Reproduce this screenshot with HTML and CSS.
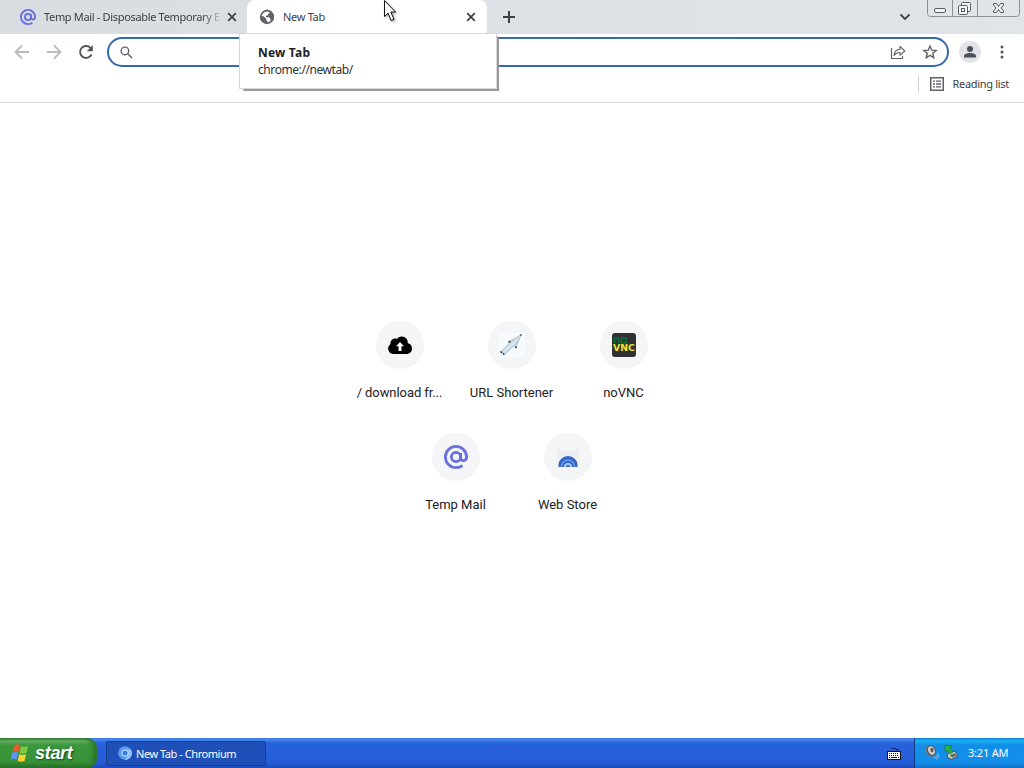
FILE: index.html
```html
<!DOCTYPE html>
<html lang="en">
<head>
    <meta charset="UTF-8">
    <meta name="viewport" content="width=device-width, initial-scale=1.0">
    <title>New Tab</title>
    <link rel="stylesheet" href="styles.css">
</head>
<body>
<svg class="defs" width="0" height="0">
    <symbol id="at" viewBox="0 0 24 24">
        <g fill="none" stroke="#6a6fe0" stroke-width="2.8">
            <circle cx="12" cy="12" r="4.6"/>
            <path d="M16.6 8v5.2c0 3.600 6 3.400 6-1.200A10.600 10.600 0 1 0 12 22.600c2.500 0 4.500-.6 6.500-2"/>
        </g>
    </symbol>
    <symbol id="close" viewBox="0 0 10 10">
        <path d="M1.2 1.2l7.600 7.600M8.800 1.2L1.200 8.800" fill="none" stroke="#3c4043" stroke-width="1.7"/>
    </symbol>
</svg>
<div class="desktop">
    <div class="tab-strip">
        <div class="tab">
            <svg class="tab-icon" width="16" height="16"><use href="#at"/></svg>
            <span class="tab-title fade">Temp Mail - Disposable Temporary E</span>
            <svg class="tab-close" width="10" height="10"><use href="#close"/></svg>
        </div>
        <div class="tab active">
            <svg class="tab-icon" width="16" height="16" viewBox="0 0 16 16">
                <circle cx="8" cy="8" r="6.300" fill="#fff" stroke="#5f6368" stroke-width="1.700"/>
                <path d="M5.500 1.500L11 1.300v2.200L9 5v1.500H7v1.800h3l1.300 1.200v2l2 .8L15 9V6l-2.500-3.500L8 .5zM1.500 7l3 .3 2.800 2.500v1.500l1.200 1v2.200l-3-.5L2 11z" fill="#5f6368"/>
            </svg>
            <span class="tab-title">New Tab</span>
            <svg class="tab-close" width="10" height="10"><use href="#close"/></svg>
        </div>
        <svg class="new-tab" width="14" height="14" viewBox="0 0 14 14">
            <path d="M7 1v12M1 7h12" stroke="#3c4043" stroke-width="2"/>
        </svg>
        <svg class="tab-search" width="12" height="8" viewBox="0 0 12 8">
            <path d="M1.500 1.500L6 6l4.500-4.500" fill="none" stroke="#3c4043" stroke-width="1.800"/>
        </svg>
        <svg class="window-buttons" width="94" height="18" viewBox="0 0 94 18">
            <path d="M.5 0v13.500q0 3 3 3h86q3 0 3-3V0M25.500 0v16M50.500 0v16" fill="none" stroke="#8c9096"/>
            <g fill="#f1f3f4" stroke="#5c6066">
                <rect x="7.500" y="8.500" width="11" height="4" rx="1.500"/>
                <rect x="34.500" y="2.500" width="9" height="9" rx="1"/>
                <rect x="31.500" y="5.500" width="9" height="9" rx="1"/>
                <rect x="34.500" y="8.500" width="3" height="3"/>
                <path d="M66.500 3.500h3l2 3 2-3h3v1.500L74 8l2.500 3v1.500h-3l-2-3-2 3h-3V11L69 8l-2.500-3z"/>
            </g>
        </svg>
    </div>

    <div class="toolbar">
        <svg class="nav-arrow" width="16" height="16" viewBox="0 0 16 16">
            <path d="M15 8H2M8 1.500L1.500 8 8 14.500" fill="none" stroke="#b9bbbe" stroke-width="1.800"/>
        </svg>
        <svg class="nav-arrow" width="16" height="16" viewBox="0 0 16 16">
            <path d="M1 8h13M8 1.500L14.500 8 8 14.500" fill="none" stroke="#b9bbbe" stroke-width="1.800"/>
        </svg>
        <svg class="nav-reload" width="16" height="16" viewBox="0 0 16 16">
            <path d="M13.500 10.500A6 6 0 1 1 12.300 3.700L14 5.500" fill="none" stroke="#50545a" stroke-width="1.900"/>
            <path d="M14.800 1v6.200H8.800z" fill="#50545a"/>
        </svg>
        <div class="omnibox">
            <svg width="13" height="13" viewBox="0 0 14 14">
                <g fill="none" stroke="#5f6368" stroke-width="1.500">
                    <circle cx="5.300" cy="5.300" r="4.100"/>
                    <path d="M8.300 8.300l4.700 4.700"/>
                </g>
            </svg>
            <svg class="share" width="16" height="15" viewBox="0 0 16 15">
                <path d="M1.500 3v10.500h11V11" fill="none" stroke="#5f6368" stroke-width="1.200"/>
                <path d="M4 10.500C4.500 6.500 6.500 4.500 10 4.300V1.500L14.800 6 10 10.200V7.500C7.500 7.400 5.500 8.400 4 10.500z" fill="none" stroke="#5f6368" stroke-width="1.100" stroke-linejoin="round"/>
            </svg>
            <svg class="star" width="16" height="16" viewBox="0 0 16 16">
                <path d="M8 2l1.700 4.200 4.400.3-3.400 2.900 1.100 4.400L8 11.400l-3.800 2.400 1.100-4.400-3.400-2.900 4.400-.3z" fill="none" stroke="#5f6368" stroke-width="1.400"/>
            </svg>
        </div>
        <div class="avatar">
            <svg width="14" height="14" viewBox="0 0 14 14">
                <circle cx="7" cy="4" r="3" fill="#4c5058"/>
                <path d="M1 12.500V11C1 9 4 8 7 8s6 1 6 3v1.500z" fill="#4c5058"/>
            </svg>
        </div>
        <svg class="menu" width="4" height="16" viewBox="0 0 4 16">
            <g fill="#50545a"><circle cx="2" cy="3" r="1.500"/><circle cx="2" cy="8" r="1.500"/><circle cx="2" cy="13" r="1.500"/></g>
        </svg>
    </div>

    <div class="bookmarks-bar">
        <span class="divider"></span>
        <svg width="14" height="14" viewBox="0 0 14 14">
            <rect x=".75" y=".75" width="12.500" height="12.500" fill="none" stroke="#5f6368" stroke-width="1.500"/>
            <path d="M3 4.200h2M6 4.200h5M3 7h2M6 7h5M3 9.800h2M6 9.800h5" stroke="#5f6368" stroke-width="1.300"/>
        </svg>
        <span class="reading-list">Reading list</span>
    </div>

    <div class="page">
        <div class="tiles">
            <div class="tile">
                <div class="tile-icon">
                    <svg width="24" height="24" viewBox="0 0 24 24">
                        <path d="M5.500 21A5.500 5.500 0 0 1 2.500 11C2 7.500 5.500 4.500 9 6c2-4 9-3.200 10.500 1.500.3 1 .2 1.800.1 2.500 2.500.4 4.400 2.700 4.400 5.500 0 3.200-2.400 5.500-5.400 5.500z" fill="#000"/>
                        <path d="M12 9l4 4.300h-2.500V18h-3v-4.700H8z" fill="#fff"/>
                    </svg>
                </div>
                <span class="tile-title download">/ download fr...</span>
            </div>
            <div class="tile">
                <div class="tile-icon">
                    <svg width="26" height="24" viewBox="0 0 26 24">
                        <path d="M0 0h26v24H0z" fill="#f7fbfd"/>
                        <path d="M1 19l8.500-8.500-.5-2L23 1l-5.500 13-3-.5L6 22z" fill="#b8cad6"/>
                        <path d="M3.500 18.500L12 10l10-8-6 9-10 9z" fill="#d7e5ee"/>
                        <path d="M1.500 18.500l4 3.500M9.500 8.500l2 .500M16 14l2 .500M21 2.500l1.500-1" stroke="#34434c" stroke-width="1.500" stroke-dasharray="2 1"/>
                    </svg>
                </div>
                <span class="tile-title">URL Shortener</span>
            </div>
            <div class="tile">
                <div class="tile-icon">
                    <svg class="vnc" width="24" height="24" viewBox="0 0 24 24">
                        <rect width="24" height="24" rx="3" fill="#313131"/>
                        <path d="M2.500 10.500V5h4v5.500M9.500 5h4.500v4.700H9.500z" fill="none" stroke="#08703a" stroke-width="1.600"/>
                        <text x="1" y="18" textLength="22" lengthAdjust="spacingAndGlyphs" fill="#eee52e">VNC</text>
                    </svg>
                </div>
                <span class="tile-title">noVNC</span>
            </div>
            <div class="tile">
                <div class="tile-icon">
                    <svg width="24" height="24"><use href="#at"/></svg>
                </div>
                <span class="tile-title">Temp Mail</span>
            </div>
            <div class="tile">
                <div class="tile-icon">
                    <svg width="20" height="20" viewBox="0 0 20 20">
                        <path d="M0 1l4 3h12l4-3v17H0z" fill="#ebedee"/>
                        <path d="M.5 20v-2a9.500 9 0 0 1 19 0v2z" fill="#3467c9"/>
                        <path d="M3.500 20a6.500 7 0 0 1 13 0" fill="none" stroke="#6f9ae2" stroke-width="1.300"/>
                        <path d="M6 20a4 4 0 0 1 8 0z" fill="#bdd3f3"/>
                        <path d="M7.500 20a2.500 2.500 0 0 1 5 0z" fill="#4a7bd6"/>
                    </svg>
                </div>
                <span class="tile-title">Web Store</span>
            </div>
        </div>
    </div>

    <div class="taskbar">
        <div class="start">
            <svg width="20" height="20" viewBox="0 0 20 20">
                <path d="M4.500 2.500Q7 .5 10 2L8.500 9Q6 7.500 2.500 9z" fill="#ec5b2c"/>
                <path d="M11 3q3 1.500 7 0L16.500 10q-3.500 1.500-7 0z" fill="#80cb3c"/>
                <path d="M2 10.200q3-2 6.200-.5L6.500 16.500q-3-1.500-6 .2z" fill="#5d91f5"/>
                <path d="M9.200 11.200q3.500 1.500 7 0L14.500 18q-3.500 1.500-6.800 0z" fill="#fbd133"/>
            </svg>
            <span>start</span>
        </div>
        <div class="task">
            <svg width="14" height="14" viewBox="0 0 14 14">
                <circle cx="7" cy="7" r="6.800" fill="#5d9cf3"/>
                <path d="M7 3.500h6a6.800 6.800 0 0 1-6 10.300L10 9z" fill="#91c1fb"/>
                <circle cx="7" cy="7" r="3.500" fill="#c7e0ff"/>
                <circle cx="7" cy="7" r="2.500" fill="#3978dd"/>
            </svg>
            <span>New Tab - Chromium</span>
        </div>
        <svg class="keyboard" width="14" height="13" viewBox="0 0 14 13">
            <path d="M4 1.500h5v1h3M9 4l2-2" fill="none" stroke="#182b68"/>
            <rect x=".5" y="4.500" width="13" height="8" fill="#fff" stroke="#111"/>
            <path d="M2 6.500h10M2 8.500h10" stroke="#111" stroke-dasharray="1 1"/>
            <path d="M2 10.500h1M4 10.500h6M11 10.500h1" stroke="#111"/>
        </svg>
        <div class="tray">
            <svg width="16" height="16" viewBox="0 0 16 16">
                <path d="M1 3l6-2 5 6-3 6-4-1-4-5z" fill="#73777b"/>
                <ellipse cx="7.500" cy="6.500" rx="3.800" ry="5" transform="rotate(-25 7.500 6.500)" fill="#c9cbcc" stroke="#4b4d52"/>
                <ellipse cx="8" cy="6" rx="1.500" ry="2.300" fill="#5d5551"/>
                <path d="M10 14q4-1 4-5M12 15q3-1 3.500-4" fill="none" stroke="#8bc0ee"/>
            </svg>
            <svg width="16" height="16" viewBox="0 0 16 16">
                <path d="M5 9l7-2 2.500 5-6 3.500L4 13z" fill="#c4c8bf" stroke="#435044"/>
                <path d="M7 11l5-1.500 1 2-4 2z" fill="#52615b"/>
                <path d="M2 1l7 1-2 2 3 4-3 2-3-4-2 2z" fill="#28b53b" stroke="#127b2b" stroke-width=".6"/>
            </svg>
            <span class="clock">3:21 AM</span>
        </div>
    </div>

    <div class="tooltip">
        <strong>New Tab</strong>
        <span>chrome://newtab/</span>
    </div>
    <svg class="cursor" width="13" height="22" viewBox="0 0 13 22">
        <path d="M.5 .5v16l3.500-3.500 3 7.500 3-1.200-3.200-7.300h4.700z" fill="#fff" stroke="#111"/>
    </svg>
</div>
</body>
</html>
```
FILE: styles.css
```css
* {
    box-sizing: border-box;
}

body {
    margin: 0;
    font-family: "Noto Sans", sans-serif;
    font-size: 11px;
    letter-spacing: -0.3px;
    color: #3c4043;
}

svg {
    display: block;
    flex-shrink: 0;
}

.defs {
    position: absolute;
}

.desktop {
    position: relative;
    display: flex;
    flex-direction: column;
    width: 1024px;
    height: 768px;
    overflow: hidden;
    background: #fff;
}

.tab-strip {
    display: flex;
    align-items: center;
    height: 34px;
    padding-left: 8px;
    background: linear-gradient(90deg, #d9dce1, #dee1e6 60%, #dfe5e9);
}

.tab {
    display: flex;
    align-items: center;
    width: 239px;
    height: 34px;
    padding: 0 10px 0 12px;
}

.tab.active {
    width: 240px;
    padding-right: 11px;
    background: #fff;
    border-radius: 8px 8px 0 0;
}

.tab-title {
    flex: 1;
    margin: 0 8px;
    padding-bottom: 2px;
    white-space: nowrap;
}

.fade {
    margin-right: 4px;
    letter-spacing: -0.33px;
    -webkit-mask-image: linear-gradient(90deg, #000 158px, transparent 180px);
    mask-image: linear-gradient(90deg, #000 158px, transparent 180px);
}

.new-tab {
    margin-left: 15px;
}

.tab-search {
    margin-left: auto;
}

.window-buttons {
    align-self: flex-start;
    margin: 0 3px 0 16px;
}

.toolbar {
    display: flex;
    align-items: center;
    height: 36px;
    padding-left: 14px;
}

.nav-arrow {
    margin-right: 16px;
}

.nav-reload {
    margin-right: 13px;
}

.omnibox {
    display: flex;
    align-items: center;
    width: 842px;
    height: 30px;
    padding: 0 9px 0 11px;
    border: 2px solid #3469b0;
    border-radius: 15px;
}

.share {
    margin-left: auto;
}

.star {
    margin-left: 16px;
}

.avatar {
    display: flex;
    align-items: center;
    justify-content: center;
    width: 22px;
    height: 22px;
    margin-left: 10px;
    border-radius: 50%;
    background: #e1e3e8;
}

.menu {
    margin-left: 19px;
}

.bookmarks-bar {
    display: flex;
    align-items: center;
    justify-content: flex-end;
    height: 33px;
    padding: 0 15px 4px 0;
    border-bottom: 1px solid #d8d9dc;
}

.divider {
    width: 1px;
    height: 16px;
    margin-right: 11px;
    background: #cfd1d4;
}

.reading-list {
    margin-left: 8px;
    padding-bottom: 2px;
}

.page {
    flex: 1;
    padding-top: 202px;
}

.tiles {
    display: flex;
    flex-wrap: wrap;
    justify-content: center;
    width: 336px;
    margin: 0 auto;
}

.tile {
    display: flex;
    flex-direction: column;
    align-items: center;
    width: 112px;
    height: 112px;
    padding-top: 16px;
}

.tile-icon {
    display: flex;
    align-items: center;
    justify-content: center;
    width: 48px;
    height: 48px;
    border-radius: 50%;
    background: #f3f5f6;
}

.vnc text {
    font: bold 8px "DejaVu Sans", sans-serif;
    letter-spacing: 0;
}

.tile-title {
    margin-top: 14px;
    padding-right: 1px;
    font: 13px/20px Roboto, sans-serif;
    letter-spacing: 0;
    color: #202124;
    white-space: nowrap;
}

.download {
    letter-spacing: -0.08px;
}

.taskbar {
    display: flex;
    align-items: center;
    height: 30px;
    color: #fff;
    background: linear-gradient(#3c79e6 0, #4385ee 2px, #2862db 5px, #245cd8 24px, #1d4bbb 30px);
}

.start {
    display: flex;
    align-items: center;
    width: 97px;
    height: 30px;
    padding-left: 10px;
    border-radius: 0 10px 10px 0;
    background: linear-gradient(#377f37 0, #64b164 3px, #3c973c 7px, #379237 24px, #286f28 30px);
    box-shadow: inset -4px 0 5px #2b742b;
}

.start span {
    margin-left: 5px;
    font: italic bold 18px/22px "Liberation Sans", sans-serif;
    letter-spacing: -0.3px;
    text-shadow: 1px 1px 2px #174017;
}

.task {
    display: flex;
    align-items: center;
    width: 160px;
    height: 25px;
    margin-left: 9px;
    padding-left: 11px;
    border: 1px solid #173c8f;
    border-radius: 2px;
    background: #1e50b8;
}

.task span {
    margin-left: 4px;
    letter-spacing: -0.45px;
}

.keyboard {
    margin: 0 13px 0 auto;
}

.tray {
    display: flex;
    align-items: center;
    gap: 3px;
    width: 110px;
    height: 30px;
    padding-left: 9px;
    border-left: 1px solid #103a83;
    background: linear-gradient(#0f83d8 0, #19b2f2 3px, #128ee8 7px, #138eea 24px, #0f70c6 30px);
}

.tray svg {
    margin-bottom: 2px;
}

.clock {
    margin-left: 6px;
    padding-bottom: 1px;
    letter-spacing: -0.2px;
}

.tooltip {
    position: absolute;
    left: 239px;
    top: 33px;
    display: flex;
    flex-direction: column;
    width: 258px;
    height: 56px;
    padding: 10px 18px;
    border: 1px solid #d5d7da;
    background: #fff;
    box-shadow: 2px 2px 1px -0.5px #999;
    font-size: 12px;
    line-height: 17px;
    letter-spacing: -0.42px;
    color: #303236;
}

.tooltip strong {
    letter-spacing: 0.2px;
    color: #202124;
}

.cursor {
    position: absolute;
    left: 384px;
    top: 0;
    filter: drop-shadow(1px 1px 1px #999);
}
```
